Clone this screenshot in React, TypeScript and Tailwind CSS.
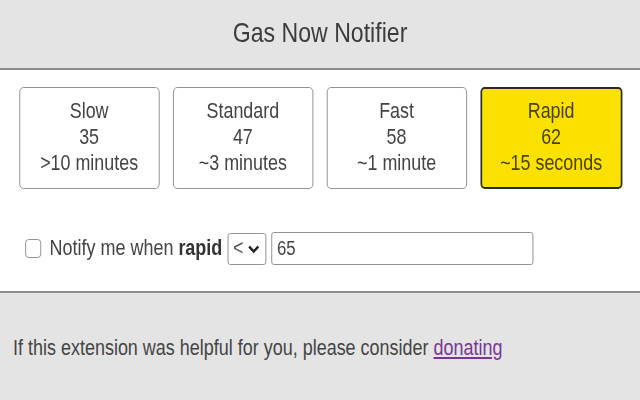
import { useState } from "react";

const font = { fontFamily: '"Liberation Sans", Arial, sans-serif' };

const speeds = [
  { label: "Slow", price: 35, time: ">10 minutes" },
  { label: "Standard", price: 47, time: "~3 minutes" },
  { label: "Fast", price: 58, time: "~1 minute" },
  { label: "Rapid", price: 62, time: "~15 seconds" },
];

// the popup is drawn a bit narrow: lay out at 762px and squeeze to 640
export default function App() {
  const [selected] = useState("Rapid");
  const [limit, setLimit] = useState("65");

  return (
    <div className="w-[640px] h-[400px] overflow-hidden bg-white">
      <div className="w-[762px] h-[400px] origin-top-left scale-x-[0.84] flex flex-col text-[#444]" style={font}>
        <div className="h-[70px] shrink-0 bg-[#e4e4e4] border-b-2 border-[#8c8c8c] flex items-center justify-center">
          <h1 className="text-[27.5px] leading-none text-[#3c3c3c] pb-[3px]">Gas Now Notifier</h1>
        </div>

        <div className="h-[221px] shrink-0 pt-[17px]">
          <div className="flex gap-[16px] pl-[22.6px]">
            {speeds.map(s => (
              <div key={s.label}
                className={
                  s.label === selected
                    ? "w-[169px] h-[102px] pb-[3px] rounded-[5px] border-2 border-[#2b2b2b] bg-[#fae100] flex flex-col items-center justify-center text-[21.3px] leading-[26px] text-[#4a4300]"
                    : "w-[167px] h-[102px] pb-[3px] rounded-[5px] border border-[#8a8a8a] bg-white flex flex-col items-center justify-center text-[21.3px] leading-[26px]"
                }>
                <div>{s.label}</div>
                <div>{s.price}</div>
                <div>{s.time}</div>
              </div>
            ))}
          </div>

          <div className="flex items-center mt-[43px] pl-[30px] text-[21.4px]">
            <span className="w-[19px] h-[19px] rounded-[4px] border border-[#8a8a8a] bg-white" />
            <span className="ml-[10px]">Notify me when <b className="text-[#333]">rapid</b></span>
            <div className="ml-[6px] w-[46px] h-[32px] rounded-[3px] border border-[#8a8a8a] flex items-center justify-center gap-[4px]">
              <span className="text-[#555]">&lt;</span>
              <svg width="16" height="10" viewBox="0 0 16 10">
                <path d="M2.5 2.5 L8 7.5 L13.5 2.5" fill="none" stroke="#222" strokeWidth="2.6" />
              </svg>
            </div>
            <input value={limit} onChange={e => setLimit(e.target.value)}
              className="ml-[6px] w-[312px] h-[33px] rounded-[3px] border border-[#8a8a8a] px-[6px] text-[20px] text-[#444] outline-none" style={font} />
          </div>
        </div>

        <div className="flex-1 bg-[#e4e4e4] border-t-2 border-[#8c8c8c] pl-[15.5px] pt-[39px] text-[21.4px]">
          If this extension was helpful for you, please consider{" "}
          <a href="#" className="underline text-[#7a3596]">donating</a>
        </div>
      </div>
    </div>
  );
}
